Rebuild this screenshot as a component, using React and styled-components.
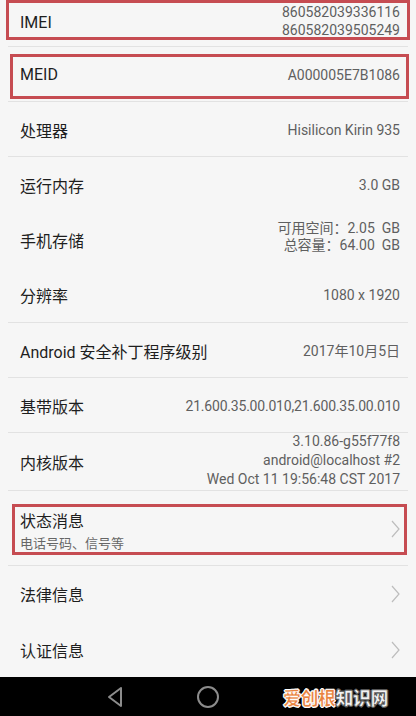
import React from "react";
import styled, { createGlobalStyle } from "styled-components";

const Global = createGlobalStyle`
  html, body { margin: 0; padding: 0; background: #f6f6f6; }
  body { font-family: Roboto, "Noto Sans CJK SC", sans-serif; }
  * { box-sizing: border-box; }
`;

const Screen = styled.div`
  width: 416px;
  height: 716px;
  background: #f6f6f6;
  display: flex;
  flex-direction: column;
  overflow: hidden;
`;

const List = styled.div`
  flex: 1;
  display: flex;
  flex-direction: column;
`;

const Row = styled.div`
  position: relative;
  height: ${(p) => p.$h}px;
  flex: none;
  display: flex;
  align-items: center;
  justify-content: space-between;
  padding: 0 16px 0 20px;
  &::after {
    content: "";
    display: ${(p) => (p.$divider ? "block" : "none")};
    position: absolute;
    left: 8px;
    right: 8px;
    bottom: 0;
    height: 1px;
    background: #e2e2e2;
  }
`;

const Label = styled.div`
  font-family: Roboto, "Noto Sans CJK SC", sans-serif;
  font-size: 16px;
  color: #1e1e1e;
  white-space: nowrap;
  margin-top: ${(p) => p.$mt || 0}px;
`;

const LabelBlock = styled.div`
  display: flex;
  flex-direction: column;
  gap: 1px;
  margin-top: ${(p) => p.$mt || 0}px;
`;

const Sub = styled.div`
  font-family: Roboto, "Noto Sans CJK SC", sans-serif;
  font-size: 13px;
  color: #666;
`;

const Value = styled.div`
  font-family: Roboto, "Noto Sans CJK SC", sans-serif;
  font-size: 14px;
  color: #5f5f5f;
  text-align: right;
  line-height: ${(p) => p.$lh || 18}px;
  letter-spacing: ${(p) => p.$ls || 0}px;
  white-space: nowrap;
  margin-top: ${(p) => p.$mt || 0}px;
`;

const Highlight = styled.div`
  position: absolute;
  left: ${(p) => p.$l}px;
  top: ${(p) => p.$t}px;
  width: ${(p) => p.$w}px;
  height: ${(p) => p.$hh}px;
  border: 3px solid #c64c52;
  pointer-events: none;
`;

const Chevron = styled.svg`
  width: 9px;
  height: 18px;
  flex: none;
`;

const NavBar = styled.div`
  position: relative;
  height: 39px;
  flex: none;
  background: #000;
  display: flex;
  align-items: center;
`;

const NavIcons = styled.div`
  display: flex;
  align-items: center;
  gap: 72px;
  margin-left: 106px;
`;

const Watermark = styled.div`
  position: absolute;
  left: 283px;
  top: 9px;
  font-family: "Noto Sans CJK SC", sans-serif;
  font-weight: 900;
  font-size: 18px;
  line-height: 22px;
  letter-spacing: -0.5px;
  white-space: nowrap;
`;

const WmPart = styled.span`
  color: ${(p) => p.$c};
  -webkit-text-stroke: 0.6px ${(p) => p.$s};
  text-shadow: 1px 0 0 ${(p) => p.$s}, -1px 0 0 ${(p) => p.$s}, 0 1px 0 ${(p) => p.$s}, 0 -1px 0 ${(p) => p.$s};
`;

const Arrow = () => (
  <Chevron viewBox="0 0 9 18">
    <path d="M1 1 L8 9 L1 17" fill="none" stroke="#bdbdbd" strokeWidth="1.2" />
  </Chevron>
);

export default function App() {
  return (
    <>
      <Global />
      <Screen>
        <List>
          <Row $h={47} $divider>
            <Label $mt={-3}>IMEI</Label>
            <Value $mt={-6}>
              860582039336116
              <br />
              860582039505249
            </Value>
            <Highlight $l={6} $t={0} $w={404} $hh={40} />
          </Row>
          <Row $h={55} $divider>
            <Label>MEID</Label>
            <Value>A000005E7B1086</Value>
            <Highlight $l={10} $t={7} $w={399} $hh={45} />
          </Row>
          <Row $h={55} $divider>
            <Label>处理器</Label>
            <Value>Hisilicon Kirin 935</Value>
          </Row>
          <Row $h={55}>
            <Label>运行内存</Label>
            <Value>3.0 GB</Value>
          </Row>
          <Row $h={55}>
            <Label>手机存储</Label>
            <Value $lh={17} $mt={-5}>
              可用空间：2.05&nbsp; GB
              <br />
              总容量：64.00&nbsp; GB
            </Value>
          </Row>
          <Row $h={56} $divider>
            <Label>分辨率</Label>
            <Value>1080 x 1920</Value>
          </Row>
          <Row $h={55} $divider>
            <Label>Android 安全补丁程序级别</Label>
            <Value>2017年10月5日</Value>
          </Row>
          <Row $h={55} $divider>
            <Label>基带版本</Label>
            <Value $ls={-0.2}>21.600.35.00.010,21.600.35.00.010</Value>
          </Row>
          <Row $h={58} $divider>
            <Label>内核版本</Label>
            <Value $lh={19} $mt={-3}>
              3.10.86-g55f77f8
              <br />
              android@localhost #2
              <br />
              Wed Oct 11 19:56:48 CST 2017
            </Value>
          </Row>
          <Row $h={75} $divider>
            <LabelBlock $mt={3}>
              <Label>状态消息</Label>
              <Sub>电话号码、信号等</Sub>
            </LabelBlock>
            <Arrow />
            <Highlight $l={12} $t={13} $w={395} $hh={51} />
          </Row>
          <Row $h={56}>
            <Label>法律信息</Label>
            <Arrow />
          </Row>
          <Row $h={55}>
            <Label>认证信息</Label>
            <Arrow />
          </Row>
        </List>
        <NavBar>
          <NavIcons>
            <svg width="18" height="22" viewBox="0 0 18 22">
              <path d="M15 2 L3 11 L15 20 Z" fill="none" stroke="#8c8c8c" strokeWidth="2" strokeLinejoin="round" />
            </svg>
            <svg width="24" height="24" viewBox="0 0 24 24">
              <circle cx="12" cy="12" r="10" fill="none" stroke="#8c8c8c" strokeWidth="2" />
            </svg>
          </NavIcons>
          <Watermark>
            <WmPart $c="#e9823f" $s="#fff">爱创根</WmPart>
            <WmPart $c="#f2f2f2" $s="#555">知识网</WmPart>
          </Watermark>
        </NavBar>
      </Screen>
    </>
  );
}
